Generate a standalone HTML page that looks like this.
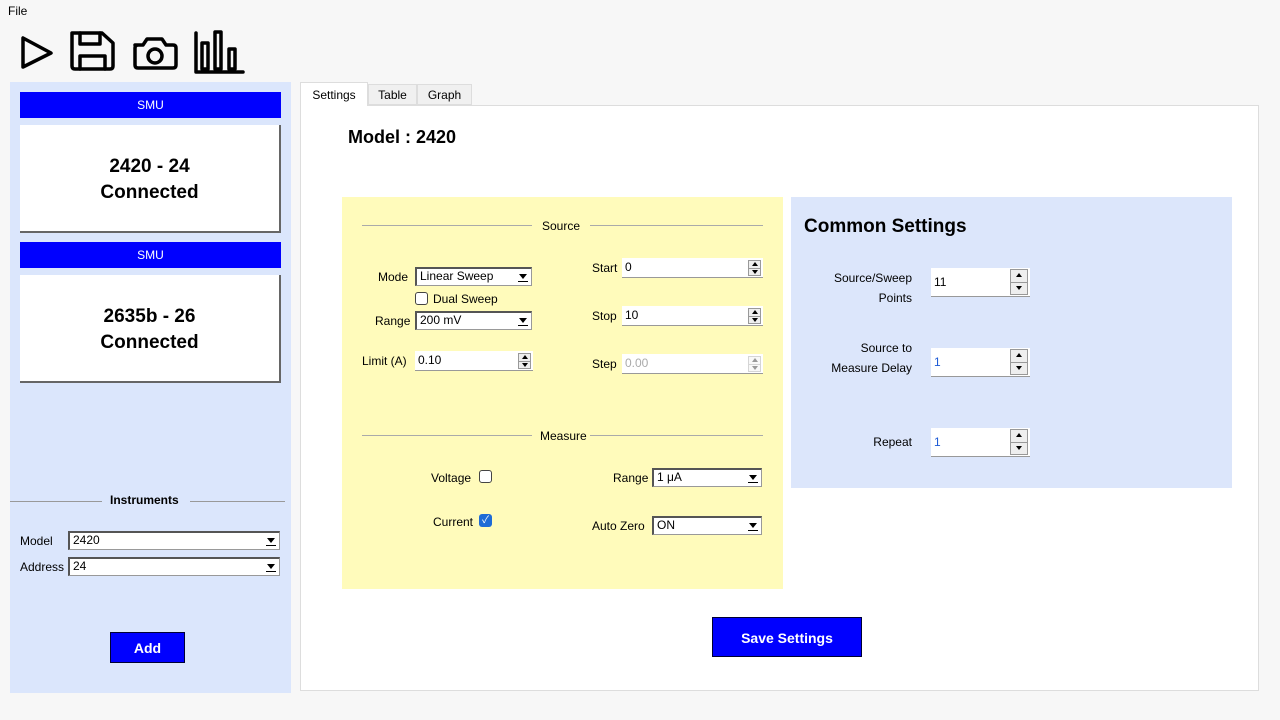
<!DOCTYPE html>
<html><head><meta charset="utf-8"><style>
*{box-sizing:border-box}
body{margin:0;width:1280px;height:720px;background:#f7f7f7;font-family:"Liberation Sans","Noto Sans CJK KR",sans-serif;font-size:12px;color:#000;position:relative;overflow:hidden}
.a{position:absolute}
.combo{position:absolute;background:#fff;border:1px solid #999;border-left:2px solid #555;border-top:2px solid #555;font-size:12px;padding:0 3px;line-height:15px;height:19px}
.combo:after{content:"";position:absolute;right:4px;top:5px;border-left:4px solid transparent;border-right:4px solid transparent;border-top:5px solid #000}
.combo:before{content:"";position:absolute;right:3px;top:12px;width:10px;border-top:1px solid #000}
.spin{position:absolute;background:#fff;border-bottom:1px solid #999;font-size:12px;padding:0 3px;line-height:19px;height:20px}
.spin .b{position:absolute;right:2px;top:2px;width:13px;height:16px;border:1px solid #999;background:#eee}
.spin .b:before{content:"";position:absolute;left:3px;top:1px;border-left:3px solid transparent;border-right:3px solid transparent;border-bottom:4px solid #000}
.spin .b:after{content:"";position:absolute;left:3px;top:9px;border-left:3px solid transparent;border-right:3px solid transparent;border-top:4px solid #000}
.spin .b i{position:absolute;left:0;right:0;top:7px;border-top:1px solid #999}
.tall{height:29px!important;line-height:29px!important}
.tall .b{width:18px;height:26px;top:1px}
.tall .b:before{left:5px;top:3px}
.tall .b:after{left:5px;top:16px}
.tall .b i{top:12px}
.card{position:absolute;left:20px;width:261px;height:108px;background:#fff;border-right:2px solid #666;border-bottom:2px solid #666;text-align:center;font-weight:bold;font-size:19px;line-height:26px;padding-top:29px}
.hdr{position:absolute;left:20px;width:261px;height:26px;background:#00f;color:#fff;text-align:center;line-height:26px;font-size:12px}
.r{text-align:right}
</style></head><body>
<div class="a" style="left:8px;top:4px">File</div>
<svg class="a" style="left:18px;top:28px" width="230" height="46" viewBox="0 0 230 46" fill="none" stroke="#000" stroke-width="3.5" stroke-linejoin="round" stroke-linecap="round">
<path d="M5 10 L5 39 L33 25 Z"/>
<path d="M54 5 H84 L95 15 V38 Q95 41 92 41 H57 Q54 41 54 38 Z"/>
<path d="M62 5 V16 H82 V5"/><path d="M62 41 V28 H87 V41"/>
<path d="M117 17 H125 L129 11 H144 L148 17 H155 Q158 17 158 20 V37 Q158 40 155 40 H120 Q117 40 117 37 V20 Q117 17 120 17 Z"/>
<circle cx="137" cy="28" r="7"/>
<path d="M178 5 V44 H225"/>
<rect x="184" y="15" width="6" height="26"/><rect x="197" y="4" width="6" height="37"/><rect x="211" y="21" width="6" height="20"/>
</svg>
<div class="a" style="left:10px;top:82px;width:281px;height:611px;background:#dbe6fc"></div>
<div class="hdr" style="top:92px">SMU</div>
<div class="card" style="top:125px">2420 - 24<br>Connected</div>
<div class="hdr" style="top:242px">SMU</div>
<div class="card" style="top:275px">2635b - 26<br>Connected</div>
<div class="a" style="left:10px;top:501px;width:92px;border-top:1px solid #999"></div>
<div class="a" style="left:190px;top:501px;width:95px;border-top:1px solid #999"></div>
<div class="a" style="left:110px;top:493px;font-weight:bold">Instruments</div>
<div class="a" style="left:20px;top:534px">Model</div>
<div class="combo" style="left:68px;top:531px;width:212px">2420</div>
<div class="a" style="left:20px;top:560px">Address</div>
<div class="combo" style="left:68px;top:557px;width:212px">24</div>
<div class="a" style="left:110px;top:632px;width:75px;height:31px;background:#00f;color:#fff;font-weight:bold;font-size:14px;text-align:center;line-height:31px;border:1px solid #003">Add</div>

<div class="a" style="left:300px;top:105px;width:959px;height:586px;background:#fff;border:1px solid #ddd"></div>
<div class="a" style="left:300px;top:82px;width:68px;height:24px;background:#fff;border:1px solid #ddd;border-bottom:none;text-align:center;line-height:24px">Settings</div>
<div class="a" style="left:368px;top:84px;width:49px;height:21px;background:#f0f0f0;border:1px solid #ddd;text-align:center;line-height:21px">Table</div>
<div class="a" style="left:417px;top:84px;width:55px;height:21px;background:#f0f0f0;border:1px solid #ddd;text-align:center;line-height:21px">Graph</div>
<div class="a" style="left:348px;top:127px;font-weight:bold;font-size:18px">Model : 2420</div>

<div class="a" style="left:342px;top:197px;width:441px;height:392px;background:#fffbbb"></div>
<div class="a" style="left:362px;top:225px;width:170px;border-top:1px solid #aaa"></div>
<div class="a" style="left:590px;top:225px;width:173px;border-top:1px solid #aaa"></div>
<div class="a" style="left:542px;top:219px">Source</div>
<div class="a" style="left:362px;top:435px;width:170px;border-top:1px solid #aaa"></div>
<div class="a" style="left:590px;top:435px;width:173px;border-top:1px solid #aaa"></div>
<div class="a" style="left:540px;top:429px">Measure</div>
<div class="a" style="left:378px;top:270px">Mode</div>
<div class="combo" style="left:415px;top:267px;width:117px">Linear Sweep</div>
<div class="a" style="left:415px;top:292px;width:13px;height:13px;border:1px solid #444;border-radius:3px;background:#fff"></div>
<div class="a" style="left:433px;top:292px">Dual Sweep</div>
<div class="a" style="left:375px;top:314px">Range</div>
<div class="combo" style="left:415px;top:311px;width:117px">200 mV</div>
<div class="a" style="left:362px;top:354px">Limit (A)</div>
<div class="spin" style="left:415px;top:351px;width:118px">0.10<span class="b"><i></i></span></div>
<div class="a" style="left:592px;top:261px">Start</div>
<div class="spin" style="left:622px;top:258px;width:141px">0<span class="b"><i></i></span></div>
<div class="a" style="left:592px;top:309px">Stop</div>
<div class="spin" style="left:622px;top:306px;width:141px">10<span class="b"><i></i></span></div>
<div class="a" style="left:592px;top:357px">Step</div>
<div class="spin" style="left:622px;top:354px;width:141px;color:#aaa">0.00<span class="b" style="opacity:.4"><i></i></span></div>
<div class="a" style="left:431px;top:471px">Voltage</div>
<div class="a" style="left:479px;top:470px;width:13px;height:13px;border:1px solid #444;border-radius:3px;background:#fff"></div>
<div class="a" style="left:433px;top:515px">Current</div>
<div class="a" style="left:479px;top:514px;width:13px;height:13px;border-radius:3px;background:#1e6bd6;color:#fff;font-size:10px;line-height:13px;text-align:center">✓</div>
<div class="a" style="left:613px;top:471px">Range</div>
<div class="combo" style="left:652px;top:468px;width:110px">1 μA</div>
<div class="a" style="left:592px;top:519px">Auto Zero</div>
<div class="combo" style="left:652px;top:516px;width:110px">ON</div>

<div class="a" style="left:791px;top:197px;width:441px;height:291px;background:#dce6fb"></div>
<div class="a" style="left:804px;top:216px;font-weight:bold;font-size:19px">Common Settings</div>
<div class="a r" style="left:800px;top:268px;width:112px;line-height:20px">Source/Sweep<br>Points</div>
<div class="spin tall" style="left:931px;top:268px;width:99px">11<span class="b"><i></i></span></div>
<div class="a r" style="left:800px;top:338px;width:112px;line-height:20px">Source to<br>Measure Delay</div>
<div class="spin tall" style="left:931px;top:348px;width:99px;color:#1e5bd6">1<span class="b"><i></i></span></div>
<div class="a r" style="left:800px;top:435px;width:112px">Repeat</div>
<div class="spin tall" style="left:931px;top:428px;width:99px;color:#1e5bd6">1<span class="b"><i></i></span></div>

<div class="a" style="left:712px;top:617px;width:150px;height:40px;background:#00f;color:#fff;font-weight:bold;font-size:14px;text-align:center;line-height:40px;border:1px solid #003">Save Settings</div>
</body></html>
